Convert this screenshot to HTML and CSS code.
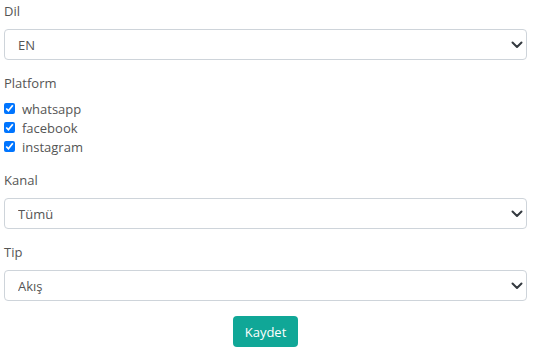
FILE: index.html
```html
<!DOCTYPE html>
<html lang="tr">
<head>
<meta charset="utf-8">
<link rel="stylesheet" href="styles.css">
</head>
<body>
<form class="form">
  <div class="group">
    <label class="label">Dil</label>
    <div class="select-wrap">
      <select class="select"><option>EN</option></select>
      <svg class="chev" width="12" height="8" viewBox="0 0 12 8"><path d="M1.5 1.5 6 6l4.5-4.5" fill="none" stroke="#343a40" stroke-width="2" stroke-linecap="round" stroke-linejoin="round"/></svg>
    </div>
  </div>
  <div class="group group-checks">
    <label class="label">Platform</label>
    <div class="checks">
      <label class="check"><input type="checkbox" checked> whatsapp</label>
      <label class="check"><input type="checkbox" checked> facebook</label>
      <label class="check"><input type="checkbox" checked> instagram</label>
    </div>
  </div>
  <div class="group">
    <label class="label">Kanal</label>
    <div class="select-wrap">
      <select class="select"><option>Tümü</option></select>
      <svg class="chev" width="12" height="8" viewBox="0 0 12 8"><path d="M1.5 1.5 6 6l4.5-4.5" fill="none" stroke="#343a40" stroke-width="2" stroke-linecap="round" stroke-linejoin="round"/></svg>
    </div>
  </div>
  <div class="group">
    <label class="label">Tip</label>
    <div class="select-wrap">
      <select class="select"><option>Akış</option></select>
      <svg class="chev" width="12" height="8" viewBox="0 0 12 8"><path d="M1.5 1.5 6 6l4.5-4.5" fill="none" stroke="#343a40" stroke-width="2" stroke-linecap="round" stroke-linejoin="round"/></svg>
    </div>
  </div>
  <div class="actions">
    <button type="button" class="btn">Kaydet</button>
  </div>
</form>
</body>
</html>
```
FILE: styles.css
```css
html, body {
  margin: 0;
  padding: 0;
  background: #fff;
}
body {
  font-family: "Open Sans", "Lato", sans-serif;
  font-size: 13px;
  color: #555;
}
.form {
  padding: 2px 6px 0 4px;
}
.group {
  margin-bottom: 14px;
}
.group-checks {
  margin-bottom: 15px;
}
.label {
  display: block;
  line-height: 19px;
  margin-bottom: 8px;
}
.select-wrap {
  position: relative;
}
.select {
  appearance: none;
  -webkit-appearance: none;
  display: block;
  width: 100%;
  height: 31px;
  box-sizing: border-box;
  border: 1px solid #ced4da;
  border-radius: 4px;
  background: #fff;
  padding: 0 30px 0 13px;
  font-family: inherit;
  font-size: 13px;
  color: #555;
}
.chev {
  position: absolute;
  right: 4px;
  top: 12px;
}
.checks {
  display: flex;
  flex-direction: column;
  margin-top: -2px;
}
.check {
  display: flex;
  align-items: center;
  height: 19px;
  gap: 1px;
}
.check input {
  margin: 0 6px 0 0;
  width: 11px;
  height: 11px;
}
.actions {
  display: flex;
  justify-content: center;
  padding-top: 1px;
}
.btn {
  background: #10a797;
  color: #fff;
  border: none;
  border-radius: 4px;
  height: 31px;
  padding: 0 12px;
  font-family: inherit;
  font-size: 13px;
}
```
